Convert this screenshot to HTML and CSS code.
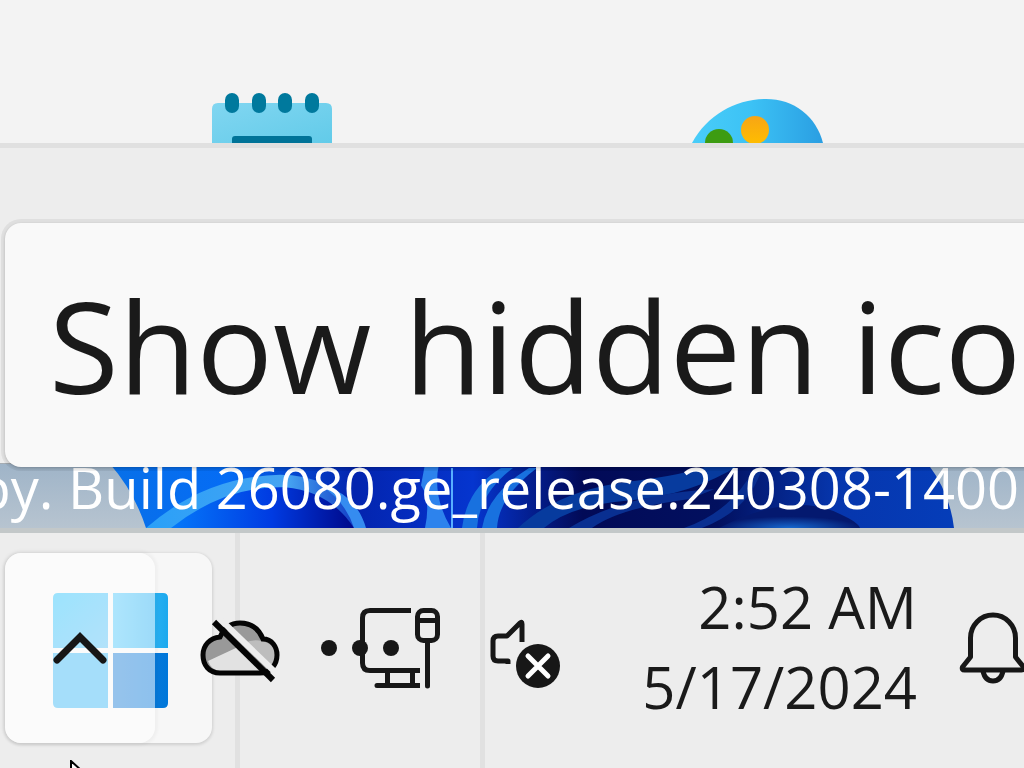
FILE: index.html
```html
<!DOCTYPE html>
<html lang="en">
<head>
<meta charset="utf-8">
<title>Taskbar</title>
<link rel="stylesheet" href="styles.css">
</head>
<body>
<div class="screen">
  <section class="apps">
    <svg class="app" width="120" height="50" viewBox="0 0 120 50" role="img" aria-label="Notepad">
      <defs><linearGradient id="pad" x1="0" x2="1" y2="1"><stop offset="0" stop-color="#81d6f1"/><stop offset="1" stop-color="#62cbe9"/></linearGradient></defs>
      <path d="M0 50V16q0-6 6-6h108q6 0 6 6v34z" fill="url(#pad)"/>
      <path d="M20 50v-4q0-3 3-3h74q3 0 3 3v4z" fill="#007398"/>
      <g fill="#00799d"><rect x="13" y="0" width="14" height="20" rx="7"/><rect x="40" y="0" width="14" height="20" rx="7"/><rect x="66" y="0" width="14" height="20" rx="7"/><rect x="93" y="0" width="14" height="20" rx="7"/></g>
    </svg>
    <svg class="app" width="134" height="44" viewBox="0 0 134 44" role="img" aria-label="Paint">
      <defs>
        <linearGradient id="pal" x1="0" x2="1"><stop offset="0" stop-color="#49cdf9"/><stop offset=".45" stop-color="#3cc2f5"/><stop offset="1" stop-color="#2a9ee2"/></linearGradient>
        <linearGradient id="or" x2="0" y2="1"><stop offset="0" stop-color="#f7a515"/><stop offset="1" stop-color="#ffbd00"/></linearGradient>
      </defs>
      <path d="M2 44C17 16 46 0 76 0c28 0 50 17 57 44z" fill="url(#pal)"/>
      <circle cx="29" cy="44" r="14" fill="#3d9c12"/>
      <circle cx="65" cy="31" r="14" fill="url(#or)"/>
    </svg>
  </section>
  <section class="panel"></section>
  <section class="wallpaper">
    <svg class="bloom" viewBox="0 0 1024 66" preserveAspectRatio="none" aria-hidden="true">
      <defs>
        <linearGradient id="sky" x2="0" y2="1"><stop offset="0" stop-color="#9fb4c8"/><stop offset="1" stop-color="#b7c4d0"/></linearGradient>
        <linearGradient id="b1"><stop offset="0" stop-color="#0870e8"/><stop offset=".14" stop-color="#056cf5"/><stop offset=".29" stop-color="#0324ae"/><stop offset=".43" stop-color="#0535cf"/><stop offset=".56" stop-color="#020a57"/><stop offset=".72" stop-color="#02105f"/><stop offset=".86" stop-color="#0636ad"/><stop offset="1" stop-color="#053db9"/></linearGradient>
        <linearGradient id="b2"><stop offset="0" stop-color="#0579fa"/><stop offset=".55" stop-color="#003be2"/><stop offset="1" stop-color="#00098a"/></linearGradient>
        <linearGradient id="b3"><stop offset="0" stop-color="#2aa0f8"/><stop offset=".65" stop-color="#46a4f2"/><stop offset="1" stop-color="#0b2fc0"/></linearGradient>
        <radialGradient id="b4" cy="1"><stop offset="0" stop-color="#1768cf"/><stop offset="1" stop-color="#04196f"/></radialGradient>
      </defs>
      <path d="M0 0h1024v66H0z" fill="url(#sky)"/>
      <path d="M110 0h818q22 30 26 66H146Q134 28 110 0z" fill="url(#b1)"/>
      <path d="M146 66Q205 13 280 11q60 0 84 55z" fill="url(#b3)"/>
      <path d="M171 66Q225 22 285 24q45 4 69 42z" fill="url(#b2)"/>
      <path d="M318 20q38 10 48 46h-12q-9-29-36-46z" fill="#358cf0"/>
      <path d="M425 0h14q-7 33 12 66h-26q6-29-4-44z" fill="#2d83ed"/>
      <path d="M451 4v62h2V4z" fill="#58afff"/>
      <path d="M462 66Q467 25 501 4h12q-34 27-36 62zM482 66Q488 30 529 4h8q-38 29-40 62z" fill="#1871df"/>
      <path d="M518 66Q558 27 630 18q57-7 83-18h28q-50 33-115 38-56 5-82 28z" fill="#073b9e"/>
      <path d="M569 66q55-35 145-40l-24 10q-70 9-98 30zM684 66q40-14 63-49l15-13q-12 43-60 62z" fill="#092f91"/>
      <path d="M719 66q74-39 122-14 17 8 19 14z" fill="url(#b4)"/>
    </svg>
    <p class="watermark">Evaluation copy. Build 26080.ge_release.240308-1400</p>
  </section>
  <footer class="taskbar">
    <div class="cell start-cell">
      <button class="start" aria-label="Start">
        <svg width="115" height="115" viewBox="0 0 115 115" aria-hidden="true">
          <defs>
            <linearGradient id="w1" x2="1" y2="1"><stop offset="0" stop-color="#28c3fb"/><stop offset="1" stop-color="#58bff5"/></linearGradient>
            <linearGradient id="w2"><stop offset="0" stop-color="#4fc8fb"/><stop offset="1" stop-color="#1da9ee"/></linearGradient>
            <linearGradient id="w3"><stop offset="0" stop-color="#1c7dd5"/><stop offset="1" stop-color="#0077da"/></linearGradient>
          </defs>
          <path d="M5 0h50v55H0V5q0-5 5-5z" fill="url(#w1)"/>
          <path d="M60 0h50q5 0 5 5v50H60z" fill="url(#w2)"/>
          <path d="M0 60h55v55H5q-5 0-5-5z" fill="#3cb7f5"/>
          <path d="M60 60h55v50q0 5-5 5H60z" fill="url(#w3)"/>
        </svg>
      </button>
      <button class="chevron" aria-label="Show hidden icons">
        <svg width="54" height="34" viewBox="0 0 54 34" fill="none" stroke="#161616" stroke-width="7" stroke-linecap="round" aria-hidden="true"><path d="M4 29 27 6l23 23" stroke-linejoin="miter"/></svg>
      </button>
      <svg class="cloud" width="82" height="66" viewBox="0 0 82 66" role="img" aria-label="OneDrive offline">
        <path d="M20 55C9 55 3 47 3 37s7-17 17-18C24 10 31 5 40 5c11 0 19 6 23 16 9 0 14 8 14 16 0 10-7 18-17 18z" fill="#999"/>
        <path d="m8 43 30-14 25 24H20Q11 52 8 43z" fill="#e2e2e2"/>
        <path d="M45 25q7-4 17-2 13 3 13 14 0 9-8 13z" fill="#bdbdbd"/>
        <path d="M20 55C9 55 3 47 3 37s7-17 17-18C24 10 31 5 40 5c11 0 19 6 23 16 9 0 14 8 14 16 0 10-7 18-17 18z" fill="none" stroke="#050505" stroke-width="5"/>
        <path d="m21 2 56 54" stroke="#ededed" stroke-width="6"/>
        <path d="m14 4 59 58" stroke="#050505" stroke-width="6"/>
      </svg>
      <svg class="cursor" width="14" height="8" viewBox="0 0 14 8" aria-hidden="true"><path d="M1 14V1l11 10z" fill="#fff" stroke="#000" stroke-width="2"/></svg>
    </div>
    <div class="cell net-cell">
      <svg width="122" height="84" viewBox="319 606 122 84" fill="none" stroke="#171717" stroke-width="5" role="img" aria-label="Network">
        <g fill="#171717" stroke="none"><circle cx="329" cy="648" r="8"/><circle cx="360" cy="648" r="8"/><circle cx="391" cy="648" r="8"/></g>
        <path d="M411 610.500h-41q-7.500 0-7.500 7.500v45q0 7.500 7.500 7.500h50M387.500 671v14M412.500 671v14M378 685.500h42"/>
        <path d="M377 685.500h6M427.500 641v45" stroke-linecap="round"/>
        <rect x="417.500" y="610.500" width="20" height="30" rx="6"/><path d="M418 620.500h20"/>
      </svg>
    </div>
    <div class="cell tray">
      <svg width="72" height="72" viewBox="489 618 72 72" role="img" aria-label="Volume muted">
        <path d="M508 664v-3h-10q-5 0-5-5v-15q0-5 5-5h9l13-13q2-2 2 1v18" fill="none" stroke="#171717" stroke-width="5" stroke-linejoin="round"/>
        <circle cx="538" cy="666" r="22" fill="#171717"/><path d="m528 656 20 20m0-20-20 20" stroke="#fff" stroke-width="5" stroke-linecap="round"/>
      </svg>
      <div class="clock"><time>2:52 AM</time><time>5/17/2024</time></div>
      <svg class="bell" width="63" height="72" viewBox="961 612 63 72" fill="none" stroke="#171717" stroke-width="5" stroke-linejoin="round" role="img" aria-label="Notifications">
        <path d="M970.500 657v-19a22.500 23 0 0 1 45 0v19l8 10q1 3-2 3h-57q-3 0-2-3z"/><path d="M983 671q2 10 10 10t10-10"/>
      </svg>
    </div>
  </footer>
  <div class="tooltip" role="tooltip">Show hidden icons</div>
</div>
</body>
</html>
```
FILE: styles.css
```css
* { box-sizing: border-box; }
body {
  margin: 0;
  font-family: "Open Sans", "Noto Sans", sans-serif;
  color: #1a1a1a;
  background: #ededed;
}
.screen {
  position: relative;
  display: flex;
  flex-direction: column;
  height: 100vh;
  overflow: hidden;
}
.apps {
  display: flex;
  align-items: flex-start;
  gap: 358px;
  height: 148px;
  padding: 93px 0 0 212px;
  background: #f3f3f3;
  border-bottom: 5px solid #e0e0e0;
  overflow: hidden;
}
.app { flex: none; }
.app + .app { margin-top: 6px; }
.panel { flex: 1; }
.wallpaper {
  position: relative;
  height: 70px;
  border-bottom: 5px solid #c3c8c9;
  border-top: 1px solid #a5acb2;
  overflow: hidden;
}
.bloom { display: block; width: 100%; height: 100%; }
.watermark {
  position: absolute;
  right: 5px;
  bottom: 9px;
  margin: 0;
  font-size: 56px;
  line-height: 64px;
  color: #fff;
  white-space: nowrap;
}
.tooltip {
  position: absolute;
  left: 5px;
  right: -160px;
  bottom: 301px;
  padding: 32px 44px;
  border-radius: 16px;
  background: #f9f9f9;
  box-shadow: 0 0 0 4px rgba(0, 0, 0, .06), 0 1px 3px rgba(0, 0, 0, .2);
  font-size: 127px;
  line-height: 180px;
  white-space: nowrap;
}
.taskbar { display: flex; height: 235px; }
.cell { position: relative; flex: none; border-right: 5px solid #e1e1e1; }
button { border: 0; padding: 0; font: inherit; cursor: default; }
.start-cell { width: 240px; padding: 20px 0 0 5px; }
.start {
  display: flex;
  align-items: center;
  justify-content: center;
  width: 207px;
  height: 190px;
  padding: 4px 0 0 4px;
  border-radius: 16px;
  background: #f7f7f7;
  box-shadow: 0 1px 3px 1px rgba(0, 0, 0, .12);
}
.chevron {
  position: absolute;
  left: 5px;
  top: 20px;
  display: flex;
  align-items: center;
  justify-content: center;
  width: 150px;
  height: 190px;
  border-radius: 16px;
  background: rgba(255, 255, 255, .54);
  box-shadow: 0 0 3px 3px rgba(0, 0, 0, .03);
}
.cloud { position: absolute; left: 200px; top: 85px; z-index: 1; }
.cursor { position: absolute; left: 70px; bottom: 0; }
.net-cell { width: 245px; padding: 73px 0 0 79px; }
.tray {
  display: flex;
  flex: 1;
  min-width: 0;
  border-right: 0;
  padding: 34px 0 0 4px;
}
.tray svg { flex: none; margin-top: 51px; }
.tray .bell { margin: 45px 0 0 44px; overflow: visible; }
.clock {
  display: flex;
  flex: 1;
  flex-direction: column;
  text-align: right;
  font-size: 58px;
  line-height: 80px;
  white-space: nowrap;
}
```
